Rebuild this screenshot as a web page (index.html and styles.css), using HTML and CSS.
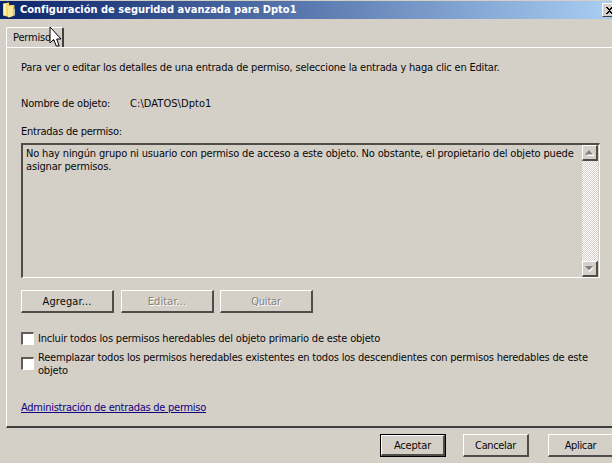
FILE: index.html
```html
<!DOCTYPE html>
<html lang="es">
<head>
<meta charset="utf-8">
<title>Configuración de seguridad avanzada para Dpto1</title>
<link rel="stylesheet" href="styles.css">
</head>
<body>
<div class="window">
  <header class="titlebar">
    <svg class="folder" width="14" height="16" viewBox="0 0 14 16">
      <path d="M1 1.500 7 .5V15L1 13.500Z" fill="#f0d873"/>
      <path d="M2 2h2v11l-2-.5z" fill="#fff3b0"/>
      <path d="M7 3h5.500v10.500L7 15.500z" fill="#dfbd4b"/>
      <path d="M6 4.500 11 3v11l-5 1.500z" fill="#f8e894"/>
      <path d="M12 7h1v6.500h-1z" fill="#b8c8c0"/>
    </svg>
    <h1 class="title">Configuración de seguridad avanzada para Dpto1</h1>
    <button class="close" aria-label="Cerrar"><svg width="9" height="8" viewBox="0 0 9 8" shape-rendering="crispEdges"><path d="M1 0h2v1h1v1h1V1h1V0h2v1H7v1H6v1H5v1h1v1h1v1h1v1H6V6H5V5H4v1H3v1H1V6h1V5h1V4h1V3H3V2H2V1H1z"/></svg></button>
  </header>
  <nav class="tabs">
    <div class="tab">Permisos</div>
    <svg class="cursor" width="13" height="22" viewBox="0 0 13 22"><path d="M1 1v16l3.700-3.500L7.300 20h2.900L7.700 13H12z" fill="#fff" stroke="#000" stroke-width="1"/></svg>
  </nav>
  <main class="panel">
    <p class="intro">Para ver o editar los detalles de una entrada de permiso, seleccione la entrada y haga clic en Editar.</p>
    <div class="object"><span class="label">Nombre de objeto:</span><span class="path">C:\DATOS\Dpto1</span></div>
    <p class="entries">Entradas de permiso:</p>
    <div class="list">
      <div class="message">No hay ningún grupo ni usuario con permiso de acceso a este objeto. No obstante, el propietario del objeto puede<br>asignar permisos.</div>
      <div class="scrollbar">
        <div class="arrow"><svg width="9" height="6" viewBox="0 0 9 6"><path d="M5 1 9 5v1H2z" fill="#fff"/><path d="M4 0 8 4.500H0z" fill="#808080"/></svg></div>
        <div class="arrow"><svg width="9" height="6" viewBox="0 0 9 6"><path d="M9 1 5 6 2 4z" fill="#fff"/><path d="M0 0h8L4 4.500z" fill="#808080"/></svg></div>
      </div>
    </div>
    <div class="actions">
      <button class="btn wide add">Agregar...</button>
      <button class="btn wide off edit">Editar...</button>
      <button class="btn wide off quit">Quitar</button>
    </div>
    <div class="check"><i class="box"></i><span>Incluir todos los permisos heredables del objeto primario de este objeto</span></div>
    <div class="check second"><i class="box"></i><div>Reemplazar todos los permisos heredables existentes en todos los descendientes con permisos heredables de este<br>objeto</div></div>
    <a class="link">Administración de entradas de permiso</a>
  </main>
  <footer class="footer">
    <div class="default"><button class="btn small">Aceptar</button></div>
    <button class="btn cancel">Cancelar</button>
    <button class="btn apply">Aplicar</button>
  </footer>
</div>
</body>
</html>
```
FILE: styles.css
```css
* { box-sizing: border-box; }
html, body { margin: 0; overflow: hidden; }
body { width: 612px; height: 463px; background: #d4d0c8; }
.window { width: 620px; height: 463px; padding-top: 1px; color: #080808; font: 11px/13px "DejaVu Sans Condensed", "DejaVu Sans", sans-serif; font-stretch: condensed; letter-spacing: -0.19px; white-space: nowrap; }
h1, p { margin: 0; font: inherit; }
button { padding: 0; color: inherit; font: inherit; letter-spacing: inherit; border-radius: 0; }
.titlebar { display: flex; align-items: flex-start; height: 18px; padding: 1px 0 0 2px; background: linear-gradient(90deg, #0a246a, #a6caf0 600px); }
.folder { width: 14px; height: 16px; }
.title { flex: 1; margin-left: 4px; line-height: 16px; color: #fff; font-weight: bold; letter-spacing: 0; }
.close { width: 16px; height: 14px; margin: 1px 2px 0 0; background: #d4d0c8; border: 1px solid; border-color: #fff #404040 #404040 #fff; text-align: left; line-height: 0; }
.close svg { margin: 1px 0 0 2px; }
.tabs { position: relative; display: flex; height: 28px; padding: 8px 0 0 6px; }
.tab { width: 58px; height: 20px; padding: 3px 0 0 6px; border: solid; border-width: 1px 2px 0 1px; border-color: #fff #404040 #fff #fff; border-radius: 2px 2px 0 0; }
.cursor { position: absolute; left: 49px; top: 7px; }
.panel { height: 381px; margin-left: 6px; padding: 13px 0 0 14px; border: solid #fff; border-width: 1px 0 2px 1px; border-bottom-color: #404040; }
.object { display: flex; margin-top: 23px; }
.label { width: 109px; }
.path { letter-spacing: 0.07px; }
.entries { margin-top: 15px; letter-spacing: -0.25px; }
.list { display: flex; width: 579px; height: 135px; margin-top: 5px; border: solid; border-width: 2px 1px 1px 2px; border-color: #504c48 #fff #fff #504c48; }
.message { flex: 1 1 0; min-width: 0; padding: 2px 0 0 3px; letter-spacing: -0.165px; }
.scrollbar { display: flex; flex: none; flex-direction: column; justify-content: space-between; width: 16px; margin-right: 1px; background: repeating-conic-gradient(#fff 0 25%, #d4d0c8 0 50%) 0 0 / 2px 2px; }
.arrow { display: flex; align-items: center; justify-content: center; width: 16px; height: 16px; background: #d4d0c8; border: solid; border-width: 1px 2px 2px 1px; border-color: #fff #504c48 #504c48 #fff; }
.actions { display: flex; margin-top: 12px; }
.btn { display: block; height: 23px; background: #d4d0c8; border: solid; border-width: 1px 2px 2px 1px; border-color: #fff #504c48 #504c48 #fff; text-align: center; }
.wide { width: 93px; margin-right: 7px; }
.add, .edit { letter-spacing: 0.1px; }
.quit { margin-left: -1px; }
.off { color: #858179; text-shadow: 1px 1px #fff; }
.check { display: flex; align-items: center; gap: 4px; margin-top: 19px; }
.second { align-items: flex-start; margin-top: 6px; letter-spacing: -0.2px; }
.box { width: 13px; height: 13px; background: #fff; border: solid; border-width: 2px 1px 1px 2px; border-color: #605c58 #fff #fff #605c58; }
.second .box { margin-top: 6px; }
.link { display: block; margin-top: 24px; color: #100080; text-decoration: underline; letter-spacing: -0.27px; }
.footer { display: flex; padding: 6px 0 0 380px; }
.default { flex: none; border: 1px solid #000; width: 66px; height: 23px; }
.small { width: 64px; height: 21px; }
.cancel { width: 66px; margin-left: 17px; letter-spacing: -0.35px; }
.apply { width: 66px; margin-left: 19px; letter-spacing: -0.35px; }
.cancel, .apply, .small { flex: none; }
```
